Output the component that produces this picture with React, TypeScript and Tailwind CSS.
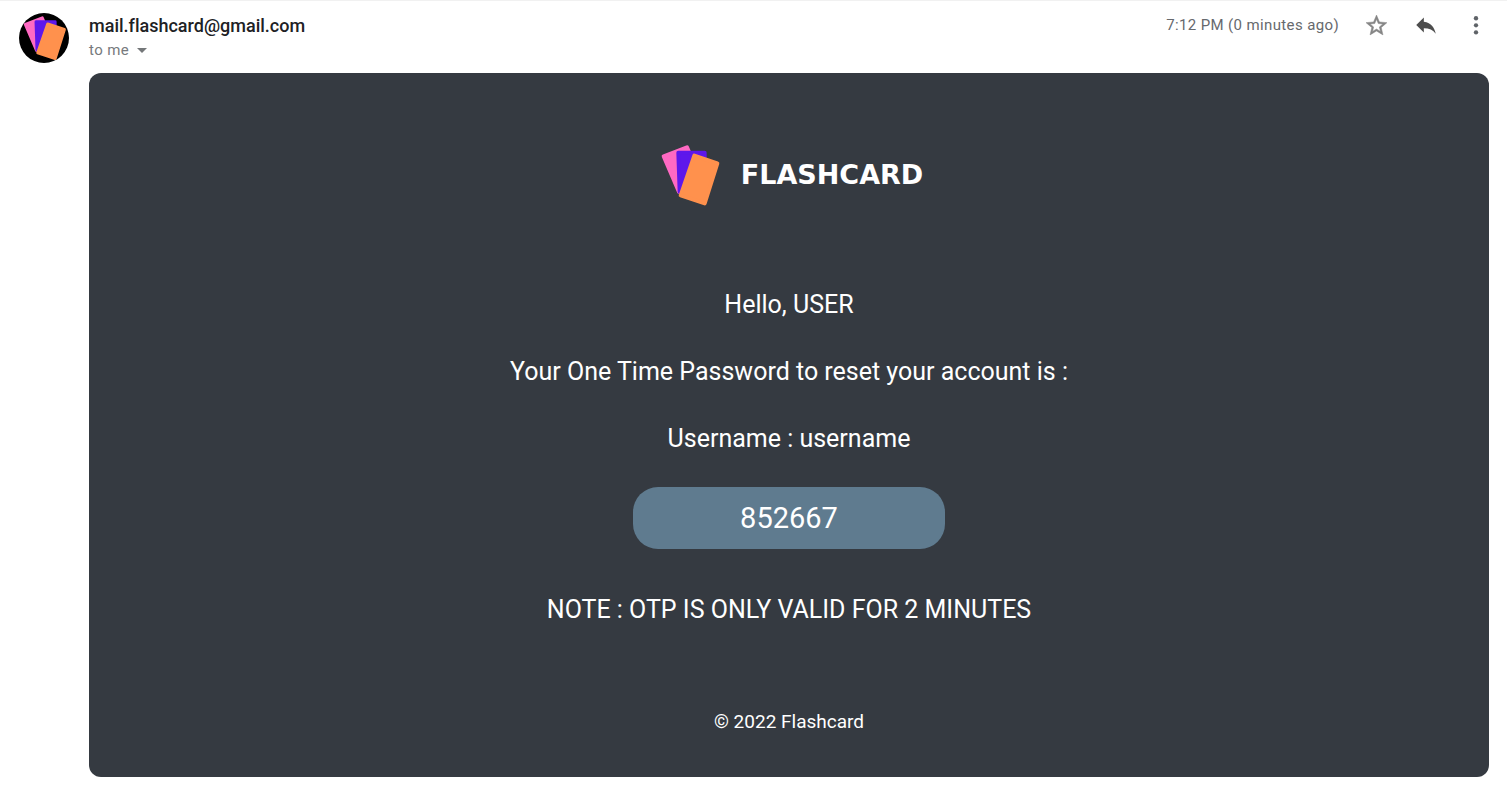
import type { ReactNode } from "react";

function Cards({ className }: { className: string }) {
  return (
    <svg viewBox="0 0 210 222" className={className} aria-hidden="true" strokeWidth="12" strokeLinejoin="round">
      <path d="M26 55 L96 28 L135 120 L72 162 Z" fill="#ff69c3" stroke="#ff69c3" />
      <path d="M70 44 L149 44 L149 150 L74 162 Z" fill="#5e17eb" stroke="#5e17eb" />
      <path d="M118 53 L187 76 L149 196 L77 172 Z" fill="#ff914d" stroke="#ff914d" />
    </svg>
  );
}

function IconButton({ label, children }: { label: string; children: ReactNode }) {
  return (
    <button type="button" aria-label={label} className="flex h-12 w-[50px] items-center justify-center">
      {children}
    </button>
  );
}

function MessageHeader() {
  return (
    <header className="flex h-[72px] items-start border-t border-[#f1f1f1] pl-[19px] pr-[6px]">
      <div className="mt-3 flex size-[50px] shrink-0 items-center justify-center overflow-hidden rounded-full bg-black">
        <Cards className="h-[54px] w-[51px] shrink-0" />
      </div>
      <div className="ml-5 flex-1 pt-[13px]">
        <h1 className="text-lg leading-6 font-medium text-[#202124] [font-variant-ligatures:none]">
          mail.flashcard@gmail.com
        </h1>
        <button type="button" className="flex items-center gap-2 text-[15px] leading-6 tracking-wide text-[#777a7d]">
          to me
          <svg viewBox="0 0 10 5" className="h-[5px] w-[10px]" fill="#747779" aria-hidden="true">
            <path d="M0 0h10L5 5z" />
          </svg>
        </button>
      </div>
      <time className="mr-3 pt-3 text-[15px] leading-6 tracking-wide text-[#66696d]">
        7:12 PM (0 minutes ago)
      </time>
      <IconButton label="Star">
        <svg viewBox="0 0 24 24" className="size-[25px]" fill="#858585" stroke="#858585" strokeWidth=".5" aria-hidden="true">
          <path d="M22 9.24l-7.19-.62L12 2 9.19 8.63 2 9.24l5.46 4.73L5.82 21 12 17.27 18.18 21l-1.63-7.03L22 9.24zM12 15.4l-3.76 2.27 1-4.28-3.32-2.88 4.38-.38L12 6.1l1.71 4.04 4.38.38-3.32 2.88 1 4.28L12 15.4z" />
        </svg>
      </IconButton>
      <IconButton label="Reply">
        <svg viewBox="0 0 24 24" className="size-[26px]" fill="#4d4d4d" aria-hidden="true">
          <path d="M10 9V5l-7 7 7 7v-4.100c5 0 8.500 1.600 11 5.100-1-5-4-10-11-11z" />
        </svg>
      </IconButton>
      <IconButton label="More">
        <svg viewBox="0 0 24 24" className="size-[26px]" fill="#5f6368" aria-hidden="true">
          <circle cx="12" cy="5.800" r="2" />
          <circle cx="12" cy="12.300" r="2" />
          <circle cx="12" cy="18.800" r="2" />
        </svg>
      </IconButton>
    </header>
  );
}

export default function App() {
  return (
    <div className="bg-white pb-[10px] font-['Roboto',sans-serif]">
      <MessageHeader />
      <main className="mt-px mr-[18px] ml-[89px] flex flex-col items-center rounded-xl bg-[#353a41] pt-[65px] pb-[41px] text-center text-white">
        <div className="flex items-center gap-4">
          <Cards className="h-[74px] w-[70px]" />
          <span className="font-['DejaVu_Sans',sans-serif] text-[27px] leading-9 font-bold">FLASHCARD</span>
        </div>
        <div className="mt-[77px] flex flex-col gap-[35px] text-[25px] leading-8">
          <p>Hello, USER</p>
          <p>Your One Time Password to reset your account is :</p>
          <p>Username : username</p>
        </div>
        <p className="mt-8 w-[312px] rounded-[25px] bg-[#5f7b8f] py-[13px] text-[29px] leading-9">852667</p>
        <p className="mt-[45px] text-[25px] leading-8">NOTE : OTP IS ONLY VALID FOR 2 MINUTES</p>
        <footer className="mt-[82px] text-[19px] leading-7">© 2022 Flashcard</footer>
      </main>
    </div>
  );
}
